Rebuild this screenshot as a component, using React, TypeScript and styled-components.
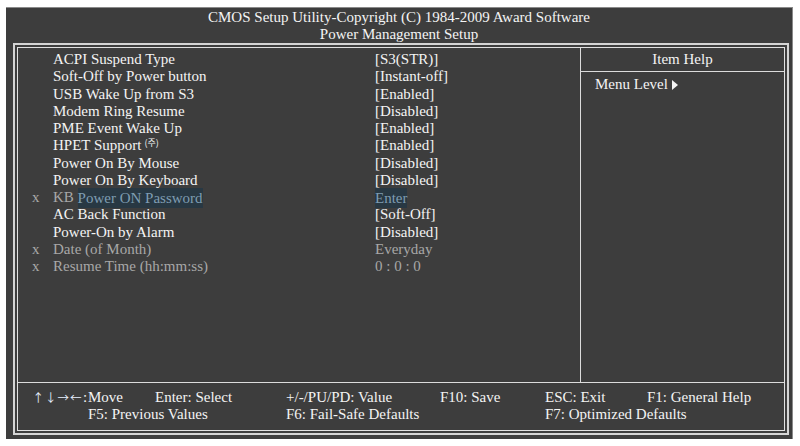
import React from "react";
import styled, { createGlobalStyle } from "styled-components";

const Global = createGlobalStyle`
  html, body { margin: 0; padding: 0; background: #ffffff; }
  body { font-family: "Liberation Serif", "Times New Roman", serif; }
`;

const Screen = styled.div`
  margin: 7px 0 0 6px;
  width: 786px;
  height: 431px;
  background: #3d3d3d;
  border-top: 1px solid #8a8a8a;
  border-right: 1px solid #8a8a8a;
  display: flex;
  flex-direction: column;
  color: #f4f4f4;
  font-size: 15px;
`;

const Title = styled.div`
  height: 34px;
  text-align: center;
  line-height: 17px;
  padding-top: 1px;
  box-sizing: border-box;
  font-size: 15px;
`;

const Frame = styled.div`
  margin: 1px 3px 4px 7px;
  flex: 1;
  border: 2px solid #d4d4d4;
  padding: 2px;
  display: flex;
`;

const Inner = styled.div`
  flex: 1;
  border: 1px solid #e0e0e0;
  display: grid;
  grid-template-columns: 563px 1fr;
  grid-template-rows: 1fr 47px;
`;

const MainPane = styled.div`
  border-right: 1px solid #dcdcdc;
  border-bottom: 1px solid #dcdcdc;
  padding-top: 3px;
`;

const Row = styled.div`
  display: grid;
  grid-template-columns: 35px 322px 1fr;
  height: 17.25px;
  line-height: 17.25px;
  white-space: nowrap;
`;

const Mark = styled.span`
  padding-left: 14px;
  color: #a8a8a8;
`;

const Label = styled.span<{ $dim?: boolean }>`
  color: ${(p) => (p.$dim ? "#a8a8a8" : "#f4f4f4")};
`;

const Value = styled.span<{ $dim?: boolean }>`
  color: ${(p) => (p.$dim ? "#a8a8a8" : "#f4f4f4")};
`;

const Hilite = styled.span`
  display: inline-block;
  background: #283843;
  color: #7f9db2;
  line-height: 20px;
  height: 20px;
  vertical-align: top;
  margin-top: -1.5px;
`;

const Sup = styled.sup`
  font-family: "Noto Sans CJK KR", sans-serif;
  font-size: 9px;
  vertical-align: 4px;
  line-height: 0;
  margin-left: 3px;
`;

const HelpPane = styled.div`
  border-bottom: 1px solid #dcdcdc;
  display: flex;
  flex-direction: column;
`;

const HelpHead = styled.div`
  height: 23px;
  border-bottom: 1px solid #dcdcdc;
  text-align: center;
  line-height: 22px;
`;

const HelpBody = styled.div`
  padding: 4px 0 0 14px;
  line-height: 17px;
  display: flex;
  align-items: center;
  gap: 4px;
`;

const Footer = styled.div`
  grid-column: 1 / 3;
  display: grid;
  grid-template-columns: 56px 67px 131px 154px 105px 102px 1fr;
  grid-auto-rows: 17px;
  padding: 6px 0 0 14px;
  line-height: 17px;
  white-space: nowrap;
`;

const Key = styled.span<{ $col: number }>`
  grid-column: ${(p) => p.$col};
`;

const Arrows = styled.span`
  grid-column: 1;
  display: flex;
  align-items: center;
`;

const ArrowGlyph = styled.span`
  display: inline-block;
  width: 12.5px;
  text-align: center;
  color: #e8f0ff;
  font-family: "Noto Sans CJK KR", "DejaVu Sans", sans-serif;
  font-size: 11.5px;
  line-height: 17px;
`;

const Colon = styled.span`
  margin-left: 1px;
`;

type Item = { label: React.ReactNode; value: React.ReactNode; x?: boolean; dim?: boolean };

const items: Item[] = [
  { label: "ACPI Suspend Type", value: "[S3(STR)]" },
  { label: "Soft-Off by Power button", value: "[Instant-off]" },
  { label: "USB Wake Up from S3", value: "[Enabled]" },
  { label: "Modem Ring Resume", value: "[Disabled]" },
  { label: "PME Event Wake Up", value: "[Enabled]" },
  { label: <>HPET Support<Sup>(주)</Sup></>, value: "[Enabled]" },
  { label: "Power On By Mouse", value: "[Disabled]" },
  { label: "Power On By Keyboard", value: "[Disabled]" },
  {
    label: <>KB <Hilite>Power ON Password</Hilite></>,
    value: <Hilite>Enter</Hilite>,
    x: true,
    dim: true,
  },
  { label: "AC Back Function", value: "[Soft-Off]" },
  { label: "Power-On by Alarm", value: "[Disabled]" },
  { label: "Date (of Month)", value: "Everyday", x: true, dim: true },
  { label: "Resume Time (hh:mm:ss)", value: "0 : 0 : 0", x: true, dim: true },
];

const arrows = ["↑", "↓", "→", "←"];

const Triangle = () => (
  <svg width="6" height="10" viewBox="0 0 6 10">
    <path d="M0 0 L6 5 L0 10 Z" fill="#f4f4f4" />
  </svg>
);

export default function App() {
  return (
    <>
      <Global />
      <Screen>
        <Title>
          CMOS Setup Utility-Copyright (C) 1984-2009 Award Software
          <br />
          Power Management Setup
        </Title>
        <Frame>
          <Inner>
            <MainPane>
              {items.map((it, i) => (
                <Row key={i}>
                  <Mark>{it.x ? "x" : ""}</Mark>
                  <Label $dim={it.dim}>{it.label}</Label>
                  <Value $dim={it.dim}>{it.value}</Value>
                </Row>
              ))}
            </MainPane>
            <HelpPane>
              <HelpHead>Item Help</HelpHead>
              <HelpBody>
                Menu Level <Triangle />
              </HelpBody>
            </HelpPane>
            <Footer>
              <Arrows>
                {arrows.map((g) => (
                  <ArrowGlyph key={g}>{g}</ArrowGlyph>
                ))}
                <Colon>:</Colon>
              </Arrows>
              <Key $col={2}>Move</Key>
              <Key $col={3}>Enter: Select</Key>
              <Key $col={4}>+/-/PU/PD: Value</Key>
              <Key $col={5}>F10: Save</Key>
              <Key $col={6}>ESC: Exit</Key>
              <Key $col={7}>F1: General Help</Key>
              <Key $col={2}>F5: Previous Values</Key>
              <Key $col={4}>F6: Fail-Safe Defaults</Key>
              <Key $col={6}>F7: Optimized Defaults</Key>
            </Footer>
          </Inner>
        </Frame>
      </Screen>
    </>
  );
}
